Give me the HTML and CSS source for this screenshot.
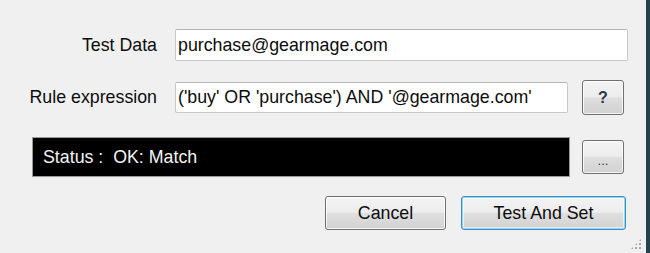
FILE: index.html
```html
<!DOCTYPE html>
<html lang="en">
<head>
    <meta charset="UTF-8">
    <title>Rule Tester</title>
    <link rel="stylesheet" href="styles.css">
</head>
<body>
    <div class="window">
        <div class="row row-data">
            <label class="field-label" for="testData">Test Data</label>
            <input type="text" id="testData" class="field field-wide" value="purchase@gearmage.com">
        </div>

        <div class="row row-rule">
            <label class="field-label" for="ruleExpr">Rule expression</label>
            <input type="text" id="ruleExpr" class="field field-rule" value="('buy' OR 'purchase') AND '@gearmage.com'">
            <button type="button" class="btn btn-small btn-help">?</button>
        </div>

        <div class="row row-status">
            <div class="status-bar">Status :&nbsp; OK: Match</div>
            <button type="button" class="btn btn-small btn-more">...</button>
        </div>

        <div class="row row-actions">
            <button type="button" class="btn btn-cancel">Cancel</button>
            <button type="submit" class="btn btn-default">Test And Set</button>
        </div>

        <div class="grip"></div>
    </div>
</body>
</html>
```

FILE: styles.css
```css
:root {
    --backgroundColor: #f0f0f0;
    --textColor: #0c0c0c;
    --fieldBorder: #c9c9c9;
    --buttonBorder: #707070;
    --frameColor: #24414f;
}

body {
    margin: 0;
    padding: 0;
    background: var(--backgroundColor);
    font-family: 'Liberation Sans', Arial, sans-serif;
    font-size: 17.8px;
    color: var(--textColor);
}

.window {
    position: relative;
    width: 650px;
    height: 253px;
    box-sizing: border-box;
    border-right: 4px solid var(--frameColor);
    overflow: hidden;
}

.row {
    display: flex;
    align-items: center;
}

.row-data {
    margin-top: 29px;
    height: 32px;
}

.row-rule {
    margin-top: 19px;
    height: 35px;
}

.row-status {
    margin-top: 22px;
    height: 40px;
}

.row-actions {
    margin-top: 19px;
    height: 34px;
    padding-left: 325px;
}

.field-label {
    width: 157px;
    text-align: right;
    margin-right: 18px;
}

.field {
    box-sizing: border-box;
    height: 32px;
    padding: 0 0 0 2px;
    background: #ffffff;
    border: 1px solid var(--fieldBorder);
    border-top-color: #b5b5b5;
    border-radius: 2px;
    font-family: inherit;
    font-size: inherit;
    color: var(--textColor);
    outline: none;
}

.field-wide {
    width: 453px;
}

.field-rule {
    width: 393px;
    height: 31px;
    margin-right: 14px;
}

.status-bar {
    box-sizing: border-box;
    width: 538px;
    height: 40px;
    margin-left: 32px;
    margin-right: 12px;
    padding-left: 10px;
    line-height: 38px;
    background: #000000;
    border: 1px solid #9a9a9a;
    color: #f4f4f4;
}

.btn {
    box-sizing: border-box;
    height: 34px;
    padding: 0;
    border: 1px solid var(--buttonBorder);
    border-radius: 3px;
    background: linear-gradient(to bottom, #f4f4f4 0%, #ececec 48%, #dedede 52%, #d2d2d2 100%);
    font-family: inherit;
    font-size: inherit;
    color: var(--textColor);
    box-shadow: inset 0 0 0 1px rgba(255, 255, 255, 0.8);
}

.btn-small {
    width: 42px;
}

.btn-help {
    height: 35px;
    font-weight: bold;
    color: #2a3550;
    font-size: 16px;
}

.btn-more {
    height: 34px;
    font-size: 13px;
    color: #333333;
    padding-top: 6px;
}

.btn-cancel {
    width: 121px;
    margin-right: 15px;
}

.btn-default {
    width: 165px;
    border-color: #3c8fc9;
    box-shadow: inset 0 0 0 1px #8fd3f5, inset 0 0 0 2px rgba(255, 255, 255, 0.6);
}

.grip {
    position: absolute;
    right: 4px;
    bottom: 3px;
    width: 12px;
    height: 12px;
    background:
        radial-gradient(circle, #a6a6a6 1.2px, transparent 1.5px) 0 0 / 4px 4px;
    clip-path: polygon(100% 0, 100% 100%, 0 100%);
}
```
